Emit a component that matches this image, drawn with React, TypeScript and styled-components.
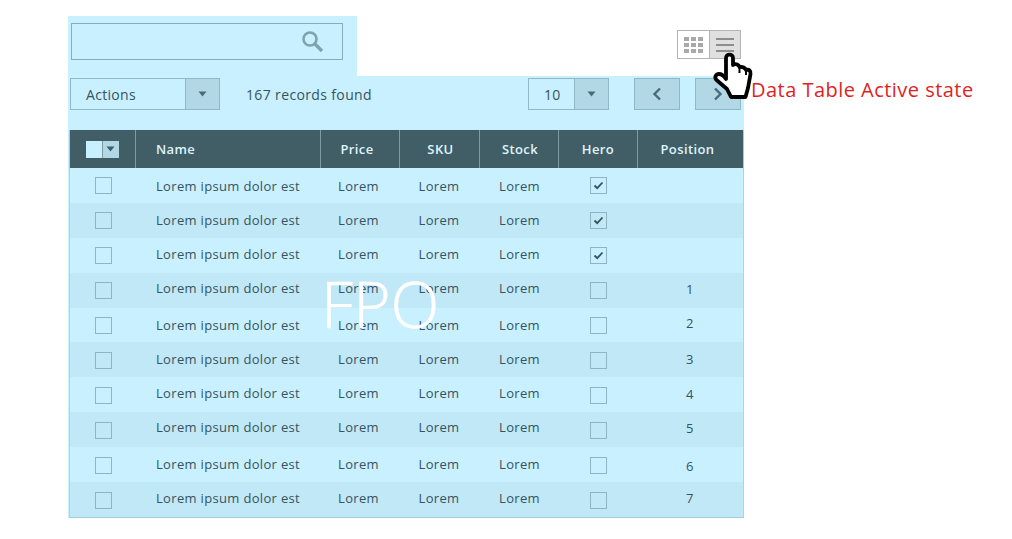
import React from 'react';
import styled, { createGlobalStyle } from 'styled-components';

const GlobalStyle = createGlobalStyle`
  html, body {
    margin: 0;
    padding: 0;
    background: #fff;
    font-family: "Open Sans", "Liberation Sans", sans-serif;
  }
`;

const COLUMNS = '65px 185px 79px 80px 79px 79px 106px';

// moves centred text sideways by `s` pixels
const nudge = (s = 0) =>
  s > 0 ? `padding-left: ${s * 2}px;` : s < 0 ? `padding-right: ${-s * 2}px;` : '';

// moves centred text up (positive) or down (negative) by half of `l` pixels
const lift = (l = 0) => (l > 0 ? `padding-bottom: ${l}px;` : l < 0 ? `padding-top: ${-l}px;` : '');

const Page = styled.div`
  position: relative;
  width: 1012px;
  height: 539px;
  overflow: hidden;
  padding: 16px 0 0 68px;
  box-sizing: border-box;
`;

const Wrap = styled.div`
  width: 676px;
`;

const TopBar = styled.div`
  display: flex;
  justify-content: space-between;
  align-items: flex-start;
  height: 60px;
`;

const SearchPanel = styled.div`
  width: 289px;
  height: 60px;
  box-sizing: border-box;
  background: #c9f0ff;
  padding: 7px 0 0 3px;
`;

const SearchBox = styled.div`
  width: 272px;
  height: 37px;
  box-sizing: border-box;
  border: 1px solid #84aebd;
  display: flex;
  align-items: center;
  justify-content: flex-end;
  padding-right: 18px;
`;

const ViewToggle = styled.div`
  display: flex;
  margin: 14px 3px 0 0;
  height: 29px;
  box-sizing: border-box;
  border: 1px solid #b4b4b4;
`;

const ViewButton = styled.div<{ $active?: boolean }>`
  width: 31px;
  box-sizing: border-box;
  display: flex;
  align-items: center;
  justify-content: center;
  background: ${p => (p.$active ? '#e0e0e0' : '#fff')};
  border-left: ${p => (p.$active ? '1px solid #b4b4b4' : 'none')};
`;

const Panel = styled.div`
  background: #c9f0ff;
  padding-top: 2px;
`;

const Toolbar = styled.div`
  display: flex;
  align-items: center;
  height: 32px;
  padding-left: 2px;
  margin-bottom: 20px;
`;

const Select = styled.div`
  display: flex;
  height: 32px;
  box-sizing: border-box;
  border: 1px solid #8fb9c8;
  color: #36535f;
`;

const SelectLabel = styled.div<{ $width: number }>`
  width: ${p => p.$width}px;
  box-sizing: border-box;
  padding-left: 15px;
  font-size: 14px;
  line-height: 32px;
  letter-spacing: 0.3px;
`;

const SelectArrow = styled.div`
  width: 34px;
  box-sizing: border-box;
  border-left: 1px solid #8fb9c8;
  background: #b2d8e6;
  display: flex;
  align-items: center;
  justify-content: center;
`;

const RecordCount = styled.div`
  margin-left: 26px;
  width: 282px;
  font-size: 14px;
  letter-spacing: 0.36px;
  color: #36535f;
`;

const Pager = styled.button<{ $gap: number }>`
  width: 46px;
  height: 32px;
  padding: 0;
  margin-left: ${p => p.$gap}px;
  border: 1px solid #8fb9c8;
  background: #b2d8e6;
  display: flex;
  align-items: center;
  justify-content: center;
`;

const Table = styled.div`
  margin-left: 1px;
  border-bottom: 1px solid #9fcfe0;
  border-left: 1px solid #a8d6e6;
  border-right: 1px solid #a8d6e6;
  box-sizing: border-box;
`;

const HeaderRow = styled.div`
  display: grid;
  grid-template-columns: ${COLUMNS};
  height: 38px;
  background: #415e67;
  box-shadow: 0 1px 2px rgba(90, 140, 160, 0.35);
`;

const HeaderCell = styled.div<{ $left?: boolean; $shift?: number }>`
  display: flex;
  align-items: center;
  justify-content: ${p => (p.$left ? 'flex-start' : 'center')};
  ${p => (p.$left ? 'padding-left: 20px;' : nudge(p.$shift))}
  border-left: 1px solid #7f9aa3;
  font-size: 13px;
  font-weight: 600;
  letter-spacing: 0.4px;
  color: #dff3fb;
  &:first-child {
    border-left: none;
  }
`;

const HeadCheck = styled.div`
  display: flex;
  width: 33px;
  height: 17px;
`;

const HeadCheckBox = styled.div`
  width: 16px;
  background: #c9f0ff;
`;

const HeadCheckArrow = styled.div`
  width: 17px;
  background: #b2d8e6;
  border-left: 1px solid #7f9aa3;
  display: flex;
  align-items: center;
  justify-content: center;
`;

const Row = styled.div<{ $striped: boolean }>`
  display: grid;
  grid-template-columns: ${COLUMNS};
  height: 34.9px;
  background: ${p => (p.$striped ? '#c1e8f7' : '#c9f0ff')};
`;

const Cell = styled.div<{ $left?: boolean; $lift: number; $shift?: number }>`
  display: flex;
  align-items: center;
  justify-content: ${p => (p.$left ? 'flex-start' : 'center')};
  ${p => (p.$left ? 'padding-left: 21px;' : nudge(p.$shift))}
  ${p => lift(p.$lift)}
  box-sizing: border-box;
  font-size: 13px;
  letter-spacing: 0.33px;
  color: #36535f;
`;

const CheckBox = styled.div`
  width: 17px;
  height: 17px;
  box-sizing: border-box;
  border: 1px solid #8fb4c2;
  display: flex;
  align-items: center;
  justify-content: center;
`;

const CheckCell = styled.div<{ $lift: number; $shift: number }>`
  display: flex;
  align-items: center;
  justify-content: center;
  box-sizing: border-box;
  ${p => nudge(p.$shift)}
  ${p => lift(p.$lift)}
`;

const Fpo = styled.div`
  position: absolute;
  left: 321px;
  top: 262px;
  font-size: 64px;
  font-weight: 300;
  line-height: 84px;
  color: #fff;
  -webkit-text-stroke: 0.4px #fff;
`;

const Cursor = styled.svg`
  position: absolute;
  left: 712px;
  top: 52px;
`;

const Note = styled.div`
  position: absolute;
  left: 751px;
  top: 76px;
  font-size: 20px;
  line-height: 27px;
  letter-spacing: 0.47px;
  color: #e01f1f;
`;

const Caret = ({ color = '#4c6a76' }: { color?: string }) => (
  <svg width="9" height="6" viewBox="0 0 9 6">
    <path d="M0.5 0.5h8L4.5 5.5z" fill={color} />
  </svg>
);

const Chevron = ({ flip }: { flip?: boolean }) => (
  <svg width="10" height="14" viewBox="0 0 10 14">
    <path
      d={flip ? 'M2 1.5l5.5 5.5L2 12.5' : 'M8 1.5L2.5 7 8 12.5'}
      fill="none"
      stroke="#4c6a76"
      strokeWidth="2.4"
    />
  </svg>
);

const rows = [
  { hero: true, position: '', text: -2, pos: 0, box: 0 },
  { hero: true, position: '', text: 1, pos: 0, box: 0 },
  { hero: true, position: '', text: 2, pos: 0, box: 0 },
  { hero: false, position: '1', text: 4, pos: 2, box: 0 },
  { hero: false, position: '2', text: 1, pos: 4, box: 0 },
  { hero: false, position: '3', text: 2, pos: 2, box: -2 },
  { hero: false, position: '4', text: 4, pos: 2, box: -2 },
  { hero: false, position: '5', text: 6, pos: 4, box: -2 },
  { hero: false, position: '6', text: 1, pos: -3, box: -2 },
  { hero: false, position: '7', text: 2, pos: 2, box: -2 },
];

const App = () => (
  <Page>
    <GlobalStyle />
    <Wrap>
      <TopBar>
        <SearchPanel>
          <SearchBox>
            <svg width="23" height="23" viewBox="0 0 23 23">
              <circle cx="9" cy="9" r="6.5" fill="none" stroke="#7fa3ae" strokeWidth="2.6" />
              <path d="M13.8 13.8L21 21" stroke="#7fa3ae" strokeWidth="3.4" />
            </svg>
          </SearchBox>
        </SearchPanel>
        <ViewToggle>
          <ViewButton>
            <svg width="19" height="16" viewBox="0 0 19 16" fill="#a9a9a9">
              {[0, 6, 12].map(y =>
                [0, 7, 14].map(x => <rect key={`${x}-${y}`} x={x} y={y} width="5" height="4" />),
              )}
            </svg>
          </ViewButton>
          <ViewButton $active>
            <svg width="18" height="14" viewBox="0 0 18 14" fill="#8d8d8d">
              <rect y="0" width="18" height="2" />
              <rect y="6" width="18" height="2" />
              <rect y="12" width="18" height="2" />
            </svg>
          </ViewButton>
        </ViewToggle>
      </TopBar>
      <Panel>
        <Toolbar>
          <Select>
            <SelectLabel $width={114}>Actions</SelectLabel>
            <SelectArrow>
              <Caret />
            </SelectArrow>
          </Select>
          <RecordCount>167 records found</RecordCount>
          <Select>
            <SelectLabel $width={45}>10</SelectLabel>
            <SelectArrow>
              <Caret />
            </SelectArrow>
          </Select>
          <Pager $gap={25}>
            <Chevron />
          </Pager>
          <Pager $gap={15}>
            <Chevron flip />
          </Pager>
        </Toolbar>
        <Table>
          <HeaderRow>
            <HeaderCell>
              <HeadCheck>
                <HeadCheckBox />
                <HeadCheckArrow>
                  <Caret color="#415e67" />
                </HeadCheckArrow>
              </HeadCheck>
            </HeaderCell>
            <HeaderCell $left>Name</HeaderCell>
            <HeaderCell $shift={-3}>Price</HeaderCell>
            <HeaderCell $shift={1}>SKU</HeaderCell>
            <HeaderCell $shift={1}>Stock</HeaderCell>
            <HeaderCell>Hero</HeaderCell>
            <HeaderCell $shift={-3}>Position</HeaderCell>
          </HeaderRow>
          {rows.map((row, i) => (
            <Row key={i} $striped={i % 2 === 1}>
              <CheckCell $lift={row.box} $shift={1}>
                <CheckBox />
              </CheckCell>
              <Cell $left $lift={row.text}>Lorem ipsum dolor est</Cell>
              <Cell $lift={row.text} $shift={-1}>Lorem</Cell>
              <Cell $lift={row.text}>Lorem</Cell>
              <Cell $lift={row.text} $shift={1}>Lorem</Cell>
              <CheckCell $lift={row.box} $shift={1}>
                <CheckBox>
                  {row.hero && (
                    <svg width="11" height="9" viewBox="0 0 11 9">
                      <path d="M1.5 4.5L4.2 7.2 9.5 1.5" fill="none" stroke="#36535f" strokeWidth="1.8" />
                    </svg>
                  )}
                </CheckBox>
              </CheckCell>
              <Cell $lift={row.pos}>{row.position}</Cell>
            </Row>
          ))}
        </Table>
      </Panel>
    </Wrap>
    <Fpo>FPO</Fpo>
    <Cursor width="42" height="50" viewBox="0 0 42 50">
      <path
        d="M14 6C14 1.500 21 1.500 21 6L21 13C24 11 27 13 27.500 15C31 14.500 33 16 34 18C37 17 39 19 38.500 22L36 36L33.500 45L19 45L15 37L4.500 28C2 25 4 22 7 22C10 22 12 24 14 27Z"
        fill="#fff"
        stroke="#000"
        strokeWidth="3.8"
        strokeLinejoin="round"
      />
      <path d="M27.500 15L27.500 21M34 18L34 23" fill="none" stroke="#000" strokeWidth="2" />
    </Cursor>
    <Note>Data Table Active state</Note>
  </Page>
);

export default App;
